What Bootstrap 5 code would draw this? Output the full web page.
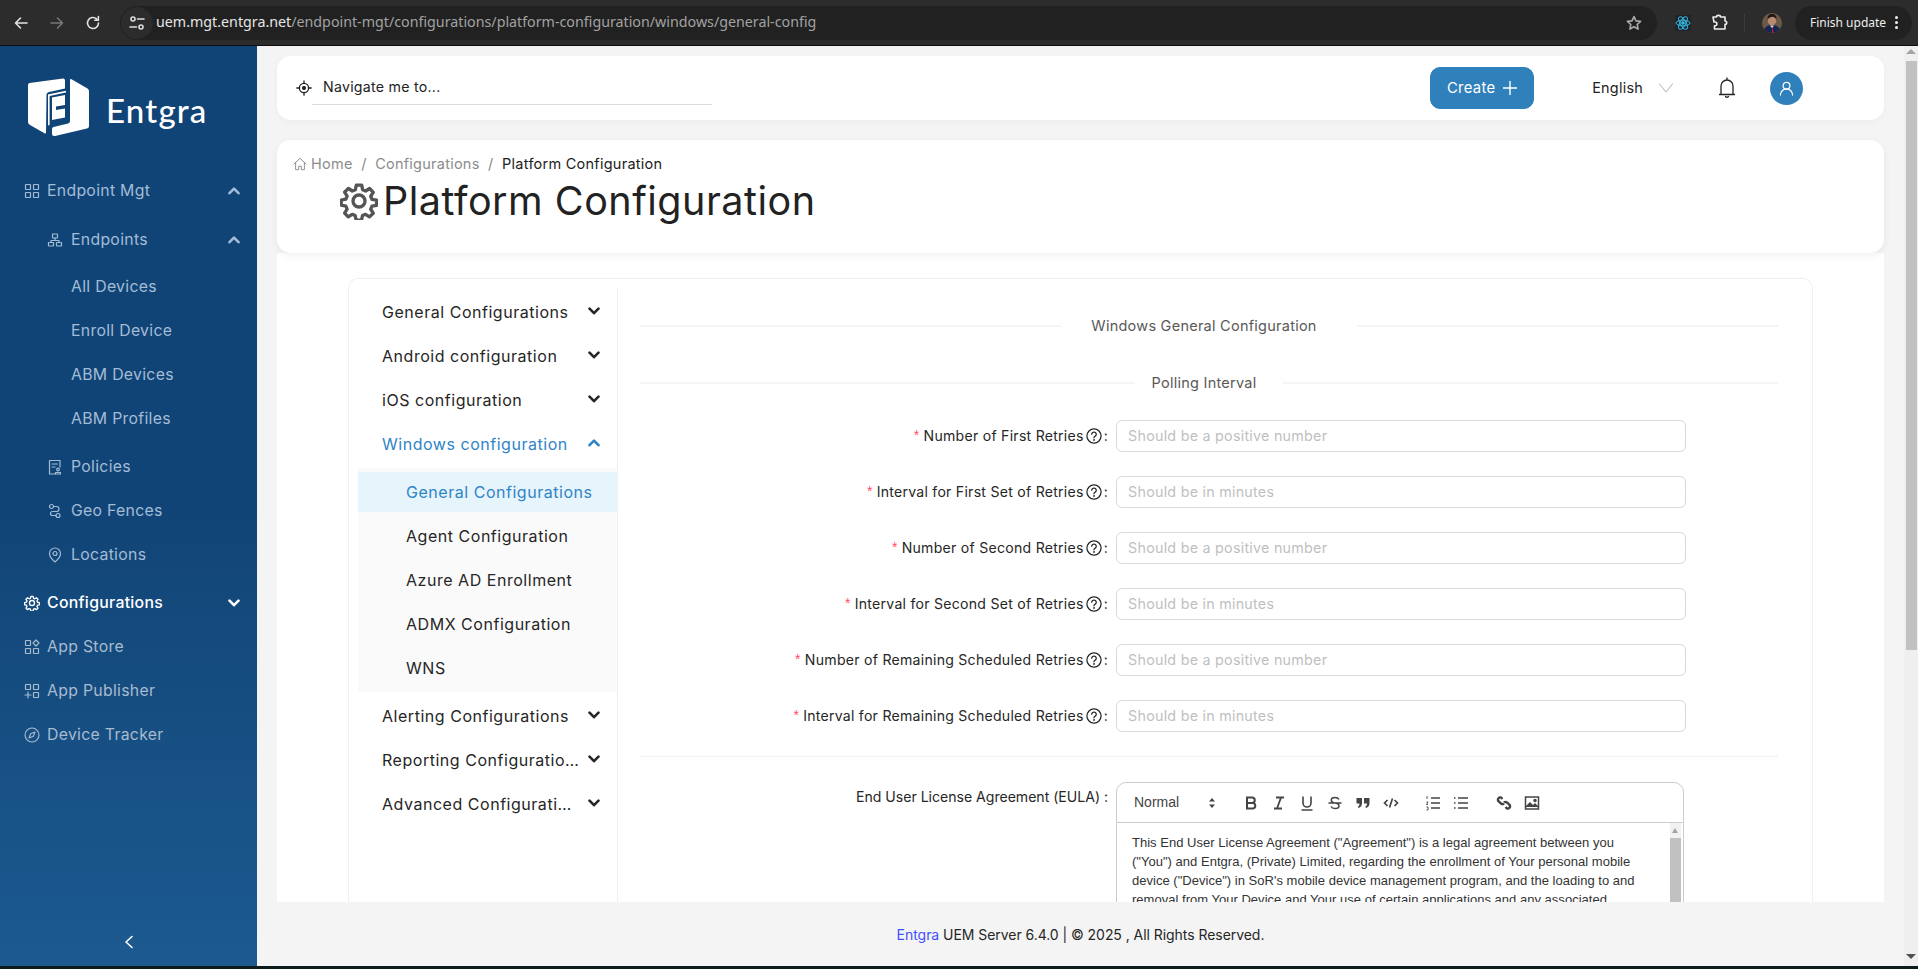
<!DOCTYPE html>
<html lang="en">
<head>
<meta charset="utf-8">
<title>Platform Configuration</title>
<link href="https://cdn.jsdelivr.net/npm/bootstrap@5.3.0/dist/css/bootstrap.min.css" rel="stylesheet">
<style>
html,body{height:969px;overflow:hidden;margin:0}
body{background:#0d1a1c;font-family:Inter,"Noto Sans",sans-serif;font-size:14.5px;letter-spacing:.25px;color:#222;width:1918px}
svg{display:block;flex:none}
.ic{fill:none;stroke:currentColor;stroke-linecap:round;stroke-linejoin:round}
/* browser chrome */
.chromebar{height:46px;background:#2c2c2c;border-bottom:1px solid #0e0e0e;color:#e3e3e3;font-family:"Noto Sans",sans-serif;letter-spacing:0}
.chromebar .ic{stroke-width:1.6}
.chrome-navs{width:120px;padding-left:13px;gap:20px}
.chrome-navs svg{width:16px;height:16px}
.omni{width:1537px;height:34px;background:#212121;border-radius:17px}
.sitebadge{width:32px;height:32px;border-radius:50%;background:#2c2c2c;margin:0 3px 0 1px;color:#ddd}
.url{font-size:14.25px;color:#a2a2a2;padding-bottom:2px}
.url b{font-weight:400;color:#e6e6e6}
.starbtn{margin-left:auto;margin-right:15px;color:#aaa}
.chrome-ext{width:138px;padding-left:18px}
.reactbox{width:16px;height:16px;background:#20232a}
.sep{width:1px;height:18px;background:#3b3b3b;margin:0 17px 0 16px}
.face{width:20px;height:20px;border-radius:50%;overflow:hidden}
.updatepill{width:117px;height:34px;border-radius:17px;background:#212121;font-size:12px;color:#eee;padding-left:15px}
.dots{margin-left:auto;margin-right:14px;gap:2px}
.dots i{display:block;width:3px;height:3px;border-radius:50%;background:#eee}
/* frame */
.appframe{height:920px}
.sidepanel{width:257px;background:linear-gradient(180deg,#114476 0,#114476 50%,#1c5a90 100%);color:#a3bcd6}
.logo-zone{height:123px;padding:31px 0 0 28px;color:#fff}
.logo-word{font-family:"Lato",sans-serif;font-size:33px;line-height:40px;font-weight:500;letter-spacing:1.2px;margin-left:17px;margin-top:13px}
.snav{list-style:none;margin:0;padding:0}
.sitem{height:44px;padding:0 16px 0 24px;font-size:15.8px;gap:7px;letter-spacing:.3px}
.sitem svg.lead-ic{width:16px;height:16px}
.sitem .chev{margin-left:auto;width:12px;height:12px;stroke-width:2.6;margin-right:1px}
.sitem.lv2{padding-left:47px;padding-right:16px;gap:8px}
.sitem.lv3{padding-left:71px}
.sitem.on{color:#fff;font-weight:500}
.sitem.gray{color:#a8bbcf}
.sp4{height:4px}
.sp5{height:5px}
.sp3{height:3px}
.collapse-btn{margin-top:auto;height:64px;padding-top:33px;color:#fff}
/* main */
.mainzone{background:#f4f4f4;padding:10px 20px 0}
.cardw{background:#fff}
.topstrip{height:64px;border-radius:14px;margin-bottom:20px;box-shadow:0 2px 6px rgba(0,0,0,.03);padding-left:18px}
.navq{width:400px;border-bottom:1px solid #dcdcdc;height:33px;margin:0 0 0 -1px;padding-left:11px;font-size:14.2px;padding-bottom:1px}
.createbtn{--bs-btn-bg:#3080bc;--bs-btn-color:#fff;--bs-btn-border-color:#3080bc;--bs-btn-hover-bg:#3080bc;--bs-btn-hover-color:#fff;--bs-btn-border-radius:10px;width:104px;height:42px;margin-left:auto;font-size:14.8px;gap:8px;padding:0;letter-spacing:.3px}
.langbox{margin-left:58px;font-size:14.4px;gap:16px}
.bellmark{margin-left:45px}
.avatarc{width:33px;height:33px;background:#3080bc;color:#fff;margin-left:34px;margin-right:81px}
.headcard{height:113px;border-radius:14px 14px 14px 14px;box-shadow:0 3px 8px rgba(0,0,0,.06);padding:13px 0 0 16px;position:relative;z-index:1}
.crumbs{--bs-breadcrumb-margin-bottom:0;--bs-breadcrumb-divider-color:#888;--bs-breadcrumb-item-padding-x:8.5px;font-size:14.5px;height:20px}
.crumbs .breadcrumb-item{color:#8c8c8c}
.crumbs .breadcrumb-item.active{color:#222}
.pagetitle{padding:5px 0 0 47px;gap:5px;height:50px}
.pagetitle h1{font-size:39.5px;margin:0;font-weight:400;letter-spacing:.5px;color:#222;line-height:50px}
.bodycard{height:649px;overflow:hidden;padding:25px 71px 0 71px}
.innerbox{height:640px;border:1px solid #f0f0f0;border-bottom:0;border-radius:10px 10px 0 0;padding-top:10px}
.lmenu{width:269px;border-right:1px solid #f0f0f0;padding-left:9px;flex:none}
.litem{height:44px;padding:0 17px 0 24px;font-size:16px;letter-spacing:.53px;color:#262626}
.litem span{white-space:nowrap;overflow:hidden;text-overflow:ellipsis;flex:1;min-width:0;padding:1px 8px 0 0}
.litem .chev{width:12px;height:12px;stroke-width:2.6}
.litem.blue{color:#2f84c8}
.lsub{background:#fafafa;padding:4px 0 0;margin:3px 0 1px;height:224px}
.lsubitem{height:40px;margin-bottom:4px;padding:0 0 1px 48px;font-size:16px;letter-spacing:.53px;color:#262626}
.lsubitem.act{background:#e6f4fb;color:#2f84c8}
.rpanel{padding:0 0 0 22px;width:1159px}
.sepline{height:44px;margin-top:0;gap:0;color:#595959;font-size:14.5px;font-weight:400}
.sepline i{display:block;height:2px;background:#f5f5f5;flex:1}
.sepline span{padding:0 40px 0 30px;flex:none}
.sepline.sl2{margin-top:13px;height:44px;margin-bottom:0}
.sepline.sl2 span{padding:0 27px 0 17px}
.frow{height:32px;margin-bottom:24px;gap:8px}
.flabel{width:468px;flex:none;font-size:14.1px;color:#262626;text-align:right;gap:2px}
.flabel em{color:#ff4d6a;font-style:normal;margin-right:2px;font-family:"Liberation Sans",sans-serif}
.finput{width:570px;height:32px;border-radius:6px;border:1px solid #d9d9d9;padding:0 11px 1px;font-size:14.3px;letter-spacing:.25px}
.finput::placeholder{color:#bfbfbf;opacity:1}
.hsep{border:0;height:1px;background:#f0f0f0;opacity:1;margin:0 0 25px;width:1138px}
.eulalabel{letter-spacing:-.02px;padding-top:4px}
.editorw{width:568px;flex:none}
.etool{height:41px;border:1px solid #ccc;border-radius:10px 10px 0 0;padding-left:17px;color:#444;font-family:"Liberation Sans",sans-serif;letter-spacing:0;font-size:14px}
.etool svg{width:16px;height:16px}
.etool svg.updown{width:8px;height:12px}
.ebody{border:1px solid #ccc;border-top:0;height:100px;font-family:"Liberation Sans",sans-serif;font-size:13px;line-height:19px;letter-spacing:.02px;color:#333;padding:10px 2px 0 15px}
.ebody p{margin:0;width:510px;flex:none}
.etrack{width:11px;margin-left:auto;background:#f1f1f1;height:90px;margin-top:-10px;padding-top:15px;position:relative}
.etrack div{height:80px;background:#c1c1c1}
.etrack::before{content:"";position:absolute;top:5px;left:2px;width:0;height:0;border:3.5px solid transparent;border-top:0;border-bottom:5px solid #a3a3a3}
.pagefoot{height:64px;font-size:14px;color:#262626;letter-spacing:-.05px}
.pagefoot span{color:#3f51ff}
.scrollcol{width:14px;background:#efefef;flex:none;position:relative;padding:15px 1px 0 2px;margin-right:0}
.scrollcol .thumb{height:589px;background:#c1c1c1}
.arrow-up{width:0;height:0;border:5px solid transparent;border-top:0;border-bottom-color:#a3a3a3;position:absolute;top:3px;left:2px}
.arrow-down{width:0;height:0;border:5px solid transparent;border-bottom:0;border-top-color:#505050;position:absolute;bottom:7px;left:2px}
</style>
</head>
<body>
<svg width="0" height="0" style="position:absolute">
 <defs>
  <symbol id="chev-d" viewBox="0 0 12 12"><path d="M1.5 3.6 6 8.2l4.5-4.6"/></symbol>
  <symbol id="chev-u" viewBox="0 0 12 12"><path d="M1.5 8.2 6 3.6l4.5 4.6"/></symbol>
  <symbol id="gear" viewBox="0 0 24 24"><path d="M10.3 2h3.4l.6 2.9 1.9.8 2.5-1.6 2.3 2.4-1.6 2.5.8 1.9 2.9.6v3.2l-2.9.6-.8 1.9 1.6 2.5-2.4 2.3-2.5-1.6-1.9.8-.6 2.9h-3.4l-.6-2.9-1.9-.8-2.5 1.6-2.3-2.4 1.6-2.5-.8-1.9-2.9-.6v-3.2l2.9-.6.8-1.9-1.6-2.5 2.4-2.3 2.5 1.6 1.9-.8z"/><circle cx="12" cy="12" r="3.8"/></symbol>
  <symbol id="qmark" viewBox="0 0 14 14"><circle cx="7" cy="7" r="6.200"/><path d="M5 5.500a2 1.900 0 1 1 3 1.600q-1 .5-1 1.500"/><circle cx="7" cy="10.500" r=".3"/></symbol>
 </defs>
</svg>

<!-- browser bar -->
<div class="chromebar d-flex align-items-center">
 <div class="chrome-navs d-flex align-items-center">
  <svg class="ic" viewBox="0 0 16 16"><path d="M14 8H2.5M7.5 3 2.5 8l5 5"/></svg>
  <svg class="ic" style="color:#777" viewBox="0 0 16 16"><path d="M2 8h11.5M8.5 3l5 5-5 5"/></svg>
  <svg class="ic" viewBox="0 0 16 16"><path d="M13.5 8A5.5 5.5 0 1 1 11.6 3.8M13.4 1.6v3.6H9.8"/></svg>
 </div>
 <div class="omni d-flex align-items-center">
  <div class="sitebadge d-flex align-items-center justify-content-center">
   <svg class="ic" width="16" height="16" viewBox="0 0 16 16"><circle cx="4" cy="4" r="2"/><path d="M8.5 4H15M1 12h6.5"/><circle cx="12" cy="12" r="2"/></svg>
  </div>
  <div class="url"><b>uem.mgt.entgra.net</b>/endpoint-mgt/configurations/platform-configuration/windows/general-config</div>
  <svg class="starbtn ic" width="16" height="16" viewBox="0 0 16 16"><path d="M8 1.6l2 4.3 4.6.5-3.4 3.1.9 4.6L8 11.8l-4.1 2.3.9-4.6L1.4 6.4 6 5.9z"/></svg>
 </div>
 <div class="d-flex align-items-center chrome-ext">
  <svg class="reactbox" viewBox="0 0 16 16" fill="none" stroke="#2fb8dd" stroke-width="1"><ellipse cx="8" cy="8" rx="7" ry="2.8"/><ellipse cx="8" cy="8" rx="7" ry="2.8" transform="rotate(60 8 8)"/><ellipse cx="8" cy="8" rx="7" ry="2.8" transform="rotate(120 8 8)"/><circle cx="8" cy="8" r="1.3" fill="#2fb8dd"/></svg>
  <svg class="ic" style="margin-left:20px;color:#eee" width="17" height="17" viewBox="0 0 17 17"><path d="M2 3h3.5a2 1.6 0 0 1 4 0H14v4a1.5 1.5 0 0 1 0 3.4V15H3.5v-3.2h.5a1.8 1.8 0 0 0 0-3.800H3z"/></svg>
  <div class="sep"></div>
  <svg class="face" viewBox="0 0 20 20"><rect width="20" height="20" fill="#6b5a48"/><circle cx="10" cy="8" r="4.200" fill="#b98a70"/><path d="M5.500 6q0-5 4.500-5t4.500 5q-2-2.500-4.500-2.200T5.500 6z" fill="#1e1612"/><path d="M1 20q1-8 9-8t9 8z" fill="#16264f"/><path d="M10 12.500l1.800 7.500h-1.800z" fill="#c22040"/><path d="M8 12.500h4l-2 2.500z" fill="#e8e4e4"/></svg>
 </div>
 <div class="updatepill d-flex align-items-center">Finish update
  <div class="dots d-flex flex-column"><i></i><i></i><i></i></div>
 </div>
</div>

<div class="appframe d-flex">
 <!-- sidebar -->
 <aside class="sidepanel d-flex flex-column flex-none">
  <div class="logo-zone d-flex align-items-start">
   <svg width="61" height="60" viewBox="0 0 61 60" fill="#fff"><path d="M1.500 6 35 1.500q2 0 2 2v8L21 15q-2.500.5-2.500 2.500L18 55.500q0 1.500-1.500.8L2 48q-2-1-2-3V8q0-1.700 1.500-2z"/><path d="M42 3q0-1.500 1.500-.7L59.500 11.500q1.500 1 1.500 2.500v35q0 2-2 2.500L27 59q-3 .5-3-2v-5q0-1.500 1.500-2L40 46.500q2-.5 2-2.500z"/><path d="M20 17.500 38 13.700v1.800L21.600 19v29l-1.600.4z"/><path d="M24 20.500 37 18v10l-9 1.600V33l9-1.600v9L24 43z"/></svg>
   <div class="logo-word">Entgra</div>
  </div>
  <ul class="snav">
   <li class="sitem d-flex align-items-center"><svg class="lead-ic ic" viewBox="0 0 16 16" stroke-width="1.2"><rect x="1.500" y="1.500" width="5" height="5" rx=".4"/><rect x="9.500" y="1.500" width="5" height="5" rx=".4"/><rect x="1.500" y="9.500" width="5" height="5" rx=".4"/><rect x="9.500" y="9.500" width="5" height="5" rx=".4"/></svg>Endpoint Mgt<svg class="chev ic"><use href="#chev-u"/></svg></li>
   <li class="sp5"></li>
   <li class="sitem lv2 d-flex align-items-center"><svg class="lead-ic ic" viewBox="0 0 16 16" stroke-width="1.200"><rect x="5.500" y="2" width="5" height="4" rx=".4"/><rect x="1.500" y="10.500" width="5" height="3.500" rx=".4"/><rect x="9.500" y="10.500" width="5" height="3.500" rx=".4"/><path d="M8 6v2.500M4 10.500V8.500h8v2"/></svg>Endpoints<svg class="chev ic"><use href="#chev-u"/></svg></li>
   <li class="sp3"></li>
   <li class="sitem lv3 d-flex align-items-center">All Devices</li>
   <li class="sitem lv3 d-flex align-items-center">Enroll Device</li>
   <li class="sitem lv3 d-flex align-items-center">ABM Devices</li>
   <li class="sitem lv3 d-flex align-items-center">ABM Profiles</li>
   <li class="sp4"></li>
   <li class="sitem lv2 d-flex align-items-center"><svg class="lead-ic ic" viewBox="0 0 16 16" stroke-width="1.200"><path d="M8 15H2.500V1.500H13V8M5 5h5.500M5 8h3"/><circle cx="11" cy="10.500" r="1.300"/><path d="M8.500 15v-1.500h5V15z"/></svg>Policies</li>
   <li class="sitem lv2 d-flex align-items-center"><svg class="lead-ic ic" viewBox="0 0 16 16" stroke-width="1.200"><circle cx="4.500" cy="3.500" r="2"/><circle cx="11" cy="12.500" r="2"/><path d="M6.500 3.500h3a2.500 2.500 0 0 1 0 5h-4a2 2 0 0 0 0 4H9"/></svg>Geo Fences</li>
   <li class="sitem lv2 d-flex align-items-center"><svg class="lead-ic ic" viewBox="0 0 16 16" stroke-width="1.200"><path d="M8 15S2.500 10.500 2.500 6.500a5.500 5.500 0 0 1 11 0C13.500 10.500 8 15 8 15z"/><circle cx="8" cy="6.500" r="2"/></svg>Locations</li>
   <li class="sp4"></li>
   <li class="sitem on d-flex align-items-center"><svg class="lead-ic ic" viewBox="0 0 24 24" stroke-width="2"><use href="#gear"/></svg>Configurations<svg class="chev ic"><use href="#chev-d"/></svg></li>
   <li class="sitem gray d-flex align-items-center"><svg class="lead-ic ic" viewBox="0 0 16 16" stroke-width="1.200"><rect x="1.500" y="1.500" width="5" height="5" rx=".4"/><path d="M12 1l3 3-3 3-3-3z"/><rect x="1.500" y="9.500" width="5" height="5" rx=".4"/><rect x="9.500" y="9.500" width="5" height="5" rx=".4"/></svg>App Store</li>
   <li class="sitem gray d-flex align-items-center"><svg class="lead-ic ic" viewBox="0 0 16 16" stroke-width="1.200"><rect x="1.500" y="1.500" width="5" height="5" rx=".4"/><rect x="9.500" y="1.500" width="5" height="5" rx=".4"/><path d="M4 9v6M1 12h6"/><rect x="9.500" y="9.500" width="5" height="5" rx=".4"/></svg>App Publisher</li>
   <li class="sitem gray d-flex align-items-center"><svg class="lead-ic ic" viewBox="0 0 16 16" stroke-width="1.100"><circle cx="8" cy="8" r="7"/><path d="M11 5 9.300 9.300 5 11l1.700-4.300z"/></svg>Device Tracker</li>
  </ul>
  <div class="collapse-btn d-flex justify-content-center">
   <svg class="ic" width="12" height="14" viewBox="0 0 12 14" stroke-width="1.600"><path d="M9 1.500 3 7l6 5.500"/></svg>
  </div>
 </aside>

 <!-- main -->
 <div class="mainzone flex-grow-1 d-flex flex-column" style="min-width:0">
  <div class="cardw topstrip d-flex align-items-center">
   <svg class="ic" width="18" height="18" viewBox="0 0 18 18" stroke-width="1.300"><circle cx="9" cy="9" r="4.600"/><circle cx="9" cy="9" r="1.400" fill="currentColor"/><path d="M9 1.800v2.600M9 13.600v2.600M1.800 9h2.600M13.600 9h2.600"/></svg>
   <div class="navq d-flex align-items-center">Navigate me to...</div>
   <button class="btn createbtn d-flex align-items-center justify-content-center" type="button">Create <svg class="ic" width="14" height="14" viewBox="0 0 14 14" stroke-width="1.400"><path d="M7 0v14M0 7h14"/></svg></button>
   <div class="langbox d-flex align-items-center">English <svg class="ic" style="color:#bfbfbf" width="14" height="10" viewBox="0 0 14 10" stroke-width="1.100"><path d="M.5 1 7 9l6.500-8"/></svg></div>
   <svg class="ic bellmark" width="18" height="22" viewBox="0 0 18 22" stroke-width="1.300"><path d="M1.500 17.500h15M3 17.500V9a6 6 0 0 1 12 0v8.500M9 1v2M7.500 19.500q1.500 1.500 3 0"/></svg>
   <div class="avatarc rounded-circle d-flex align-items-center justify-content-center">
    <svg class="ic" width="15" height="15" viewBox="0 0 16 16" stroke-width="1.300"><circle cx="8" cy="5" r="3.600"/><path d="M1.500 15a6.500 6.500 0 0 1 13 0"/></svg>
   </div>
  </div>

  <div class="cardw headcard">
   <nav aria-label="breadcrumb">
    <ol class="breadcrumb crumbs align-items-center">
     <li class="breadcrumb-item d-flex align-items-center" style="gap:4px"><svg class="ic" width="14" height="14" viewBox="0 0 16 16" stroke-width="1.100"><path d="M1 8 8 1.500 15 8M3 6.500V14.500h3.500v-4h3v4H13V6.500"/></svg>Home</li>
     <li class="breadcrumb-item">Configurations</li>
     <li class="breadcrumb-item active" aria-current="page">Platform Configuration</li>
    </ol>
   </nav>
   <div class="pagetitle d-flex align-items-center">
    <svg class="ic" style="color:#555" width="38" height="38" viewBox="0 0 24 24" stroke-width="2.100"><use href="#gear"/></svg>
    <h1>Platform Configuration</h1>
   </div>
  </div>

  <div class="cardw bodycard">
   <div class="innerbox d-flex">
    <div class="lmenu">
     <div class="litem d-flex align-items-center"><span>General Configurations</span><svg class="chev ic"><use href="#chev-d"/></svg></div>
     <div class="litem d-flex align-items-center"><span>Android configuration</span><svg class="chev ic"><use href="#chev-d"/></svg></div>
     <div class="litem d-flex align-items-center"><span>iOS configuration</span><svg class="chev ic"><use href="#chev-d"/></svg></div>
     <div class="litem blue d-flex align-items-center"><span>Windows configuration</span><svg class="chev ic"><use href="#chev-u"/></svg></div>
     <div class="lsub">
      <div class="lsubitem act d-flex align-items-center">General Configurations</div>
      <div class="lsubitem d-flex align-items-center">Agent Configuration</div>
      <div class="lsubitem d-flex align-items-center">Azure AD Enrollment</div>
      <div class="lsubitem d-flex align-items-center">ADMX Configuration</div>
      <div class="lsubitem d-flex align-items-center">WNS</div>
     </div>
     <div class="litem d-flex align-items-center"><span>Alerting Configurations</span><svg class="chev ic"><use href="#chev-d"/></svg></div>
     <div class="litem d-flex align-items-center"><span>Reporting Configurations</span><svg class="chev ic"><use href="#chev-d"/></svg></div>
     <div class="litem d-flex align-items-center"><span>Advanced Configurations</span><svg class="chev ic"><use href="#chev-d"/></svg></div>
    </div>
    <div class="rpanel">
     <div class="sepline d-flex align-items-center" style="width:1138px;margin-top:15px"><i></i><span>Windows General Configuration</span><i></i></div>
     <div class="sepline sl2 d-flex align-items-center" style="width:1138px;margin-bottom:15px"><i></i><span>Polling Interval</span><i></i></div>
     <form>
      <div class="frow d-flex align-items-center"><div class="flabel d-flex align-items-center justify-content-end"><em>*</em>Number of First Retries <svg class="ic" width="16" height="16" stroke-width="1.100"><use href="#qmark"/></svg>:</div><input class="form-control finput" placeholder="Should be a positive number"></div>
      <div class="frow d-flex align-items-center"><div class="flabel d-flex align-items-center justify-content-end"><em>*</em>Interval for First Set of Retries <svg class="ic" width="16" height="16" stroke-width="1.100"><use href="#qmark"/></svg>:</div><input class="form-control finput" placeholder="Should be in minutes"></div>
      <div class="frow d-flex align-items-center"><div class="flabel d-flex align-items-center justify-content-end"><em>*</em>Number of Second Retries <svg class="ic" width="16" height="16" stroke-width="1.100"><use href="#qmark"/></svg>:</div><input class="form-control finput" placeholder="Should be a positive number"></div>
      <div class="frow d-flex align-items-center"><div class="flabel d-flex align-items-center justify-content-end"><em>*</em>Interval for Second Set of Retries <svg class="ic" width="16" height="16" stroke-width="1.100"><use href="#qmark"/></svg>:</div><input class="form-control finput" placeholder="Should be in minutes"></div>
      <div class="frow d-flex align-items-center"><div class="flabel d-flex align-items-center justify-content-end"><em>*</em>Number of Remaining Scheduled Retries <svg class="ic" width="16" height="16" stroke-width="1.100"><use href="#qmark"/></svg>:</div><input class="form-control finput" placeholder="Should be a positive number"></div>
      <div class="frow d-flex align-items-center"><div class="flabel d-flex align-items-center justify-content-end"><em>*</em>Interval for Remaining Scheduled Retries <svg class="ic" width="16" height="16" stroke-width="1.100"><use href="#qmark"/></svg>:</div><input class="form-control finput" placeholder="Should be in minutes"></div>
      <hr class="hsep">
      <div class="d-flex" style="gap:8px">
       <div class="flabel eulalabel">End User License Agreement (EULA) :</div>
       <div class="editorw">
        <div class="etool d-flex align-items-center">
         <span style="width:74px">Normal</span>
         <svg class="updown" viewBox="0 0 8 12" fill="#444"><path d="M4 1 7 4.500H1zM4 11 1 7.500h6z"/></svg>
         <span class="d-flex align-items-center" style="margin-left:27px;gap:12px;font-weight:700">
          <svg viewBox="0 0 16 16" fill="none" stroke="#444" stroke-width="2"><path d="M4 2.500h5a2.700 2.700 0 0 1 0 5.500H4zM4 8h6a2.800 2.800 0 0 1 0 5.500H4z"/></svg>
          <svg viewBox="0 0 16 16" fill="none" stroke="#444" stroke-width="1.800"><path d="M5 2.500h8M3 13.500h8M10 2.500 6 13.500"/></svg>
          <svg viewBox="0 0 16 16" fill="none" stroke="#444" stroke-width="1.600"><path d="M4 1.500V8a4 4 0 0 0 8 0V1.500M2.500 15h11"/></svg>
          <svg viewBox="0 0 16 16" fill="none" stroke="#444" stroke-width="1.500"><path d="M1.500 8h13M12 4.500Q11 2.500 8 2.500 4.300 2.500 4.300 5T8 8q4 .5 4 3t-4 2.500q-3 0-4-2"/></svg>
          <svg viewBox="0 0 16 16" fill="#444"><path d="M1.500 3h5.500v5q0 4-3.500 5l-.8-1.400Q4.500 11 4.600 8.500H1.500zM9 3h5.500v5q0 4-3.500 5l-.8-1.400q1.800-.6 1.900-3.100H9z"/></svg>
          <svg viewBox="0 0 16 16" fill="none" stroke="#444" stroke-width="1.700"><path d="M4.500 5 1.500 8l3 3M11.500 5l3 3-3 3M9.500 3.500l-3 9"/></svg>
         </span>
         <span class="d-flex align-items-center" style="margin-left:26px;gap:12px">
          <svg viewBox="0 0 16 16" fill="none" stroke="#444" stroke-width="1.500"><path d="M6 3h9M6 8h9M6 13h9"/><path d="M2 1v3M1.500 7h1.500L1.500 9.500H3M1.500 12h1.500v3H1.500" stroke-width=".9"/></svg>
          <svg viewBox="0 0 16 16" fill="none" stroke="#444" stroke-width="1.500"><path d="M5 3h10M5 8h10M5 13h10M1 3h1.500M1 8h1.500M1 13h1.500"/></svg>
         </span>
         <span class="d-flex align-items-center" style="margin-left:27px;gap:12px">
          <svg viewBox="0 0 16 16" fill="none" stroke="#444" stroke-width="2.400"><path d="M6.500 4 5 2.500a2.400 2.400 0 0 0-3 3L5 8.500a2.400 2.400 0 0 0 3 0M9.500 12l1.500 1.500a2.400 2.400 0 0 0 3-3L11 7.500a2.400 2.400 0 0 0-3 0"/></svg>
          <svg viewBox="0 0 16 16" fill="none" stroke="#444" stroke-width="1.500"><rect x="1.500" y="2" width="13" height="12"/><path d="M2 12l4-4 3 3 2-2 3 3" fill="#444"/><circle cx="11" cy="5.500" r="1" fill="#444"/></svg>
         </span>
        </div>
        <div class="ebody d-flex">
         <p>This End User License Agreement ("Agreement") is a legal agreement between you ("You") and Entgra, (Private) Limited, regarding the enrollment of Your personal mobile device ("Device") in SoR's mobile device management program, and the loading to and removal from Your Device and Your use of certain applications and any associated</p>
         <div class="etrack"><div></div></div>
        </div>
       </div>
      </div>
     </form>
    </div>
   </div>
  </div>

  <footer class="pagefoot d-flex align-items-center justify-content-center"><div><span>Entgra</span> UEM Server 6.4.0 | © 2025 , All Rights Reserved.</div></footer>
 </div>

 <div class="scrollcol">
  <div class="arrow-up"></div>
  <div class="thumb"></div>
  <div class="arrow-down"></div>
 </div>
</div>
</body>
</html>
